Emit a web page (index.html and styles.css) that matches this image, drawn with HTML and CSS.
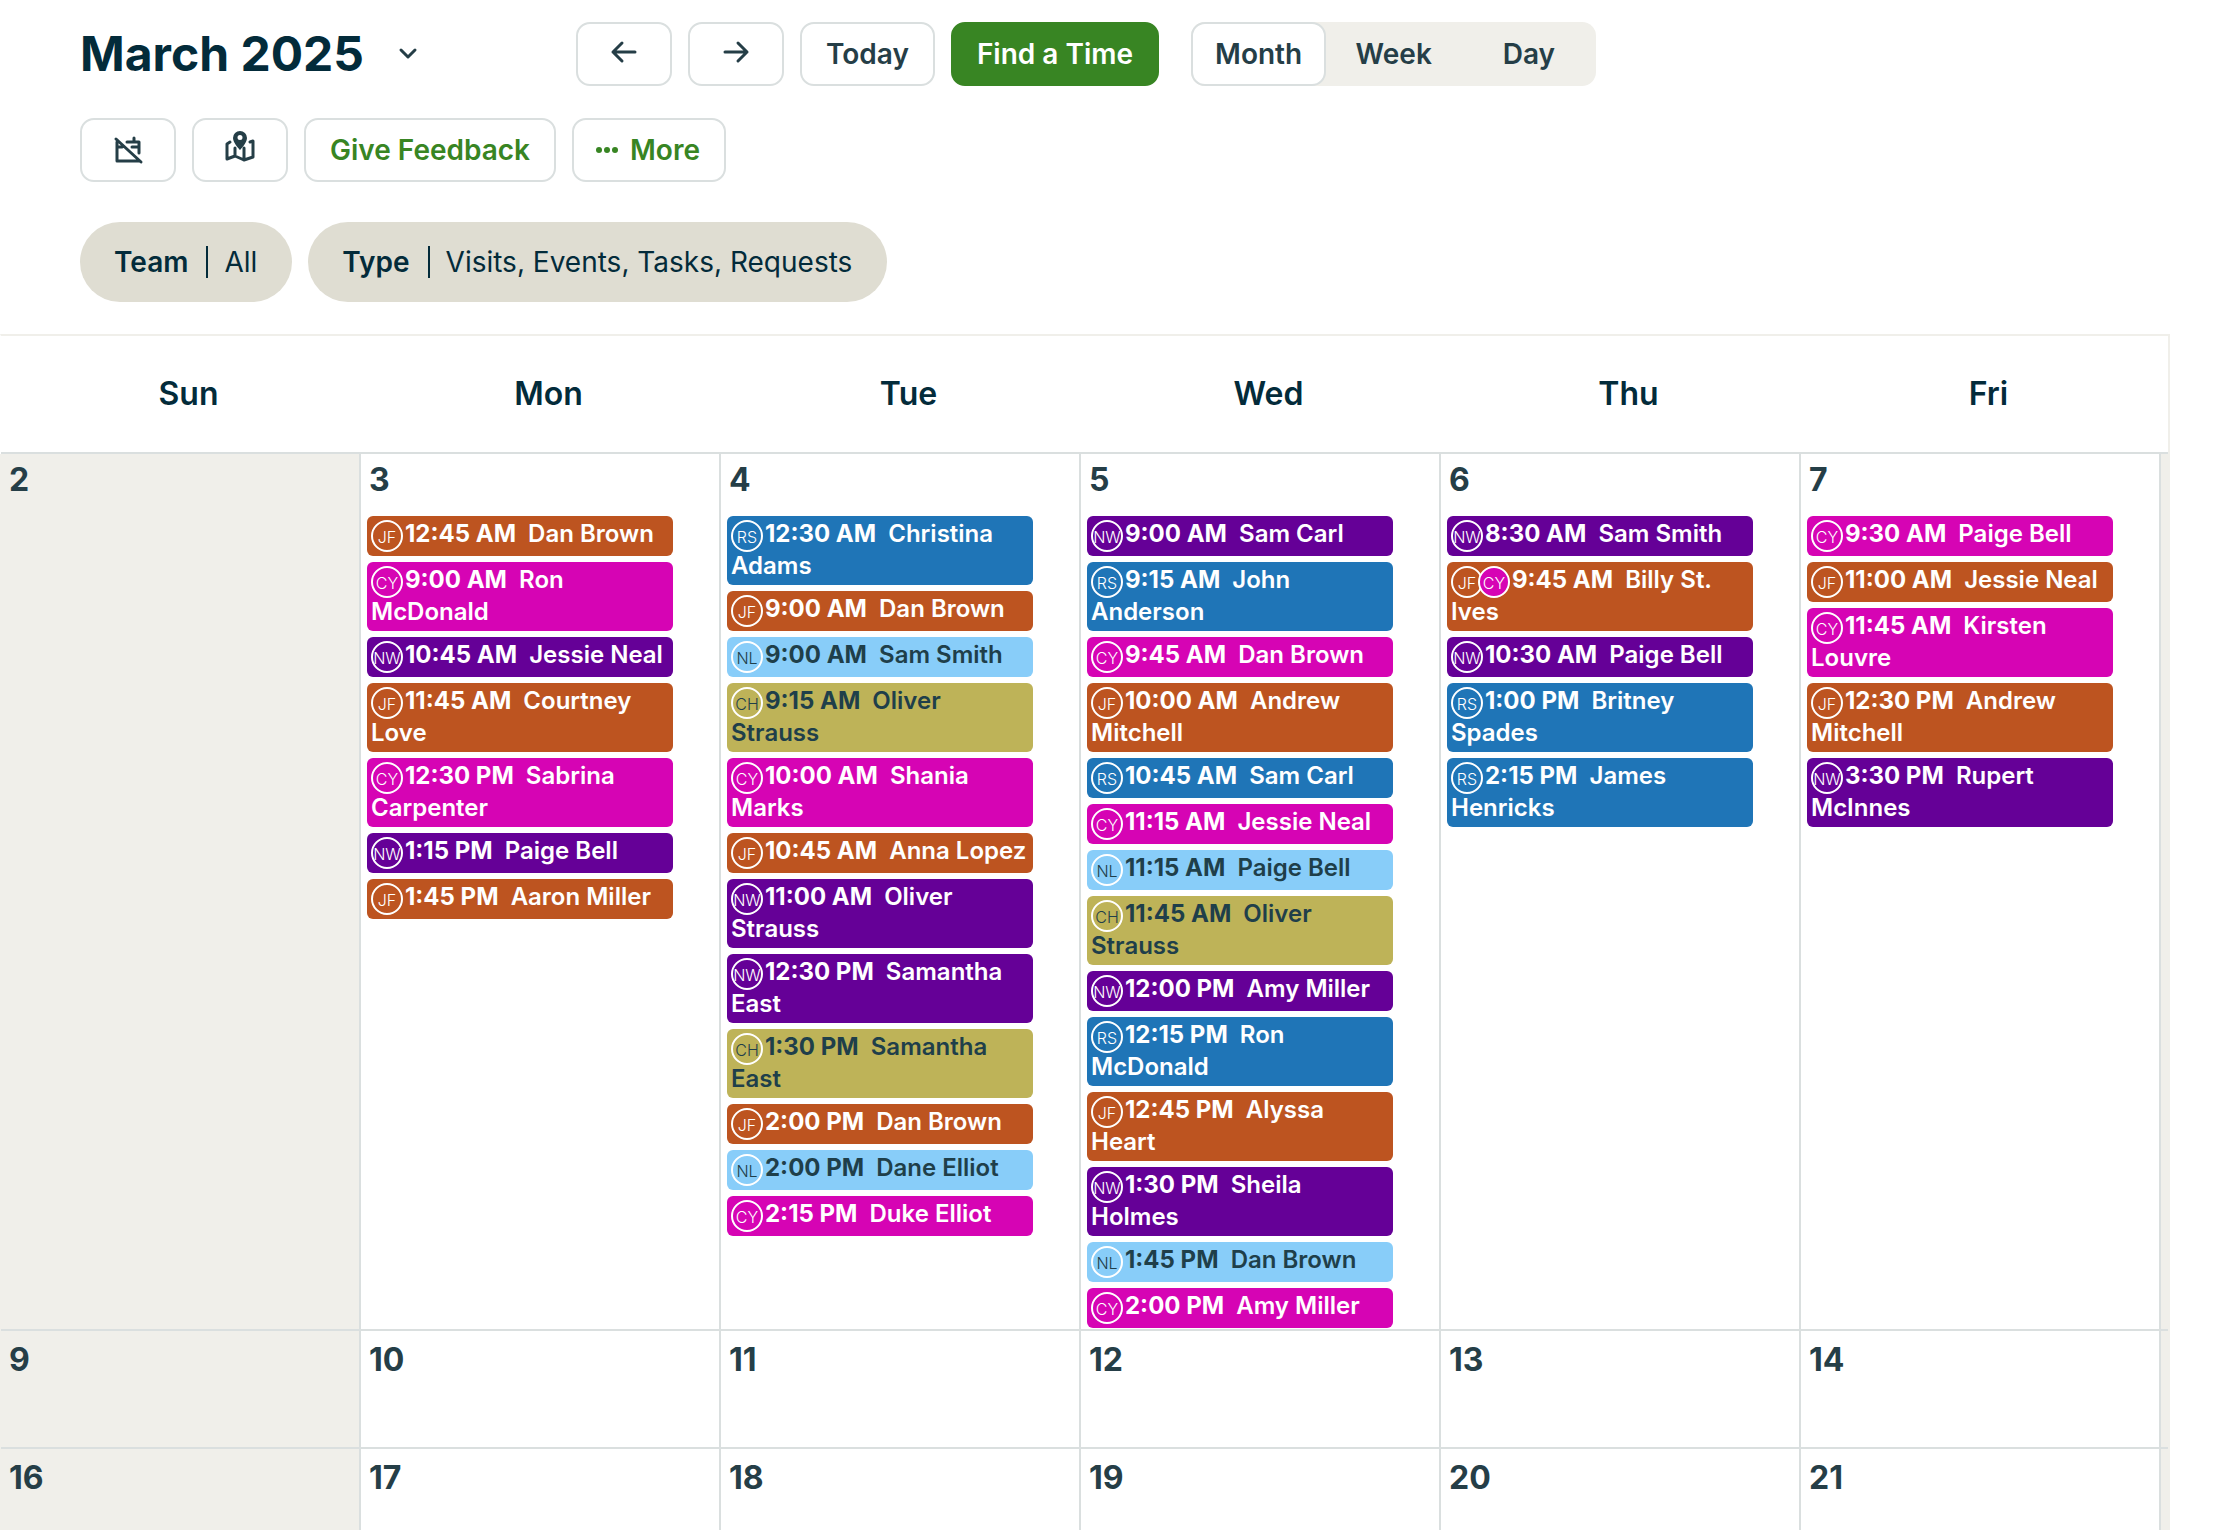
FILE: index.html
```
<!DOCTYPE html>
<html lang="en">
<head>
    <meta charset="UTF-8">
    <meta content="width=device-width, initial-scale=1.0" name="viewport">
    <title>Schedule - March 2025</title>
    <link rel="stylesheet" href="styles.css">
</head>
<body>

<!-- Toolbar -->
<header class="toolbar">
    <div class="toolbar-row">
        <div class="title-group">
            <h1>March 2025</h1>
            <button class="chevron" type="button" aria-label="Choose month">
                <svg width="20" height="12" viewBox="0 0 20 12"><path d="M3 2l7 7 7-7"/></svg>
            </button>
        </div>
        <button class="btn icon-btn" type="button" aria-label="Previous month">
            <svg width="32" height="32" viewBox="0 0 32 32"><path d="M27 14H5M14 5l-9 9 9 9"/></svg>
        </button>
        <button class="btn icon-btn" type="button" aria-label="Next month">
            <svg width="32" height="32" viewBox="0 0 32 32"><path d="M5 14h22M18 5l9 9-9 9"/></svg>
        </button>
        <button class="btn" type="button">Today</button>
        <button class="btn primary" type="button">Find a Time</button>
        <div class="views">
            <button class="view active" type="button" aria-pressed="true">Month</button>
            <button class="view" type="button" aria-pressed="false">Week</button>
            <button class="view" type="button" aria-pressed="false">Day</button>
        </div>
    </div>

    <div class="toolbar-row">
        <button class="btn icon-btn" type="button" aria-label="Hide unscheduled">
            <svg width="32" height="32" viewBox="0 0 32 32"><path d="M5 8v19h22M5 13h5M15 8h12v11M20 13h7M22 4v4M4 5l25 23"/></svg>
        </button>
        <button class="btn icon-btn" type="button" aria-label="Map">
            <svg width="32" height="32" viewBox="0 3 32 32"><path d="M6 11l-3 2v15l8-3 9 4 9-3V10l-3 1M11 17v8M20 17v12"/><path class="solid" fill-rule="evenodd" d="M16 0a7 7 0 0 1 7 7c0 5-7 12-7 12S9 12 9 7a7 7 0 0 1 7-7zM16 4a2 2 0 0 0 0 5 2 2 0 0 0 0-5z"/></svg>
        </button>
        <button class="btn link" type="button">Give Feedback</button>
        <button class="btn link more" type="button">
            <svg width="22" height="6" viewBox="0 0 22 6"><circle cx="3" cy="3" r="3"/><circle cx="11" cy="3" r="3"/><circle cx="19" cy="3" r="3"/></svg>
            More
        </button>
    </div>

    <div class="toolbar-row filters">
        <button class="filter" type="button"><b>Team</b><span>All</span></button>
        <button class="filter" type="button"><b>Type</b><span>Visits, Events, Tasks, Requests</span></button>
    </div>
</header>

<!-- Month grid, filled in by the script below -->
<table class="calendar">
    <colgroup><col><col><col><col><col><col><col class="edge"></colgroup>
    <thead>
        <tr><th>Sun</th><th>Mon</th><th>Tue</th><th>Wed</th><th>Thu</th><th>Fri</th><td></td></tr>
    </thead>
    <tbody id="weeks"></tbody>
</table>

<script>
    // [initials, time, client]
    const visits = {
        3: [
            ['JF', '12:45 AM', 'Dan Brown'],
            ['CY', '9:00 AM', 'Ron McDonald'],
            ['NW', '10:45 AM', 'Jessie Neal'],
            ['JF', '11:45 AM', 'Courtney Love'],
            ['CY', '12:30 PM', 'Sabrina Carpenter'],
            ['NW', '1:15 PM', 'Paige Bell'],
            ['JF', '1:45 PM', 'Aaron Miller']
        ],
        4: [
            ['RS', '12:30 AM', 'Christina Adams'],
            ['JF', '9:00 AM', 'Dan Brown'],
            ['NL', '9:00 AM', 'Sam Smith'],
            ['CH', '9:15 AM', 'Oliver Strauss'],
            ['CY', '10:00 AM', 'Shania Marks'],
            ['JF', '10:45 AM', 'Anna Lopez'],
            ['NW', '11:00 AM', 'Oliver Strauss'],
            ['NW', '12:30 PM', 'Samantha East'],
            ['CH', '1:30 PM', 'Samantha East'],
            ['JF', '2:00 PM', 'Dan Brown'],
            ['NL', '2:00 PM', 'Dane Elliot'],
            ['CY', '2:15 PM', 'Duke Elliot']
        ],
        5: [
            ['NW', '9:00 AM', 'Sam Carl'],
            ['RS', '9:15 AM', 'John Anderson'],
            ['CY', '9:45 AM', 'Dan Brown'],
            ['JF', '10:00 AM', 'Andrew Mitchell'],
            ['RS', '10:45 AM', 'Sam Carl'],
            ['CY', '11:15 AM', 'Jessie Neal'],
            ['NL', '11:15 AM', 'Paige Bell'],
            ['CH', '11:45 AM', 'Oliver Strauss'],
            ['NW', '12:00 PM', 'Amy Miller'],
            ['RS', '12:15 PM', 'Ron McDonald'],
            ['JF', '12:45 PM', 'Alyssa Heart'],
            ['NW', '1:30 PM', 'Sheila Holmes'],
            ['NL', '1:45 PM', 'Dan Brown'],
            ['CY', '2:00 PM', 'Amy Miller']
        ],
        6: [
            ['NW', '8:30 AM', 'Sam Smith'],
            ['JF CY', '9:45 AM', 'Billy St. Ives'],
            ['NW', '10:30 AM', 'Paige Bell'],
            ['RS', '1:00 PM', 'Britney Spades'],
            ['RS', '2:15 PM', 'James Henricks']
        ],
        7: [
            ['CY', '9:30 AM', 'Paige Bell'],
            ['JF', '11:00 AM', 'Jessie Neal'],
            ['CY', '11:45 AM', 'Kirsten Louvre'],
            ['JF', '12:30 PM', 'Andrew Mitchell'],
            ['NW', '3:30 PM', 'Rupert McInnes']
        ]
    };

    // Build one visit card
    function visitCard([people, time, client]) {
        const team = people.split(' ');
        const avatars = team.map(p => `<span class="avatar ${p.toLowerCase()}">${p}</span>`).join('');
        return `<div class="visit ${team[0].toLowerCase()}">${avatars}<b>${time}</b>&nbsp; <span>${client}</span></div>`;
    }

    // Build the weeks, each starting on Sunday
    let rows = '';
    for (const sunday of [2, 9, 16]) {
        rows += '<tr>';
        for (let day = sunday; day < sunday + 6; day++) {
            const cards = (visits[day] || []).map(visitCard).join('');
            rows += `<td><div class="date">${day}</div>${cards}</td>`;
        }
        rows += '<td></td></tr>';
    }
    document.getElementById('weeks').innerHTML = rows;
</script>

</body>
</html>
```
FILE: styles.css
```
* {
    box-sizing: border-box;
}
body {
    margin: 0;
    height: 100vh;
    overflow: hidden;
    background-color: #fff;
    color: #253e47;
    font-family: Inter, "Liberation Sans", sans-serif;
}
button {
    font: inherit;
    color: inherit;
    cursor: pointer;
}
svg {
    overflow: visible;
    fill: none;
    stroke: currentColor;
    stroke-width: 3;
    stroke-linecap: round;
    stroke-linejoin: round;
}

/* Toolbar */
.toolbar {
    padding: 22px 80px 32px;
}
.toolbar-row {
    display: flex;
    gap: 16px;
    margin-bottom: 32px;
}
.title-group {
    display: flex;
    align-items: center;
    width: 480px;
    gap: 24px;
}
h1 {
    margin: 0;
    color: #032b3a;
    font-size: 48px;
    font-weight: 700;
    line-height: 64px;
}
.chevron {
    display: flex;
    padding: 10px;
    border: none;
    background: none;
}
.btn {
    display: flex;
    align-items: center;
    justify-content: center;
    height: 64px;
    padding: 0 24px;
    border: 2px solid #dadfdf;
    border-radius: 14px;
    background-color: #fff;
    font-size: 28px;
    font-weight: 600;
}
.icon-btn {
    width: 96px;
}
.primary {
    border-color: #388523;
    background-color: #388523;
    color: #fff;
}
.link {
    color: #388523;
}
.more {
    gap: 12px;
    padding: 0 24px 0 22px;
}
.more svg, .solid {
    fill: currentColor;
    stroke: none;
}
.views {
    display: grid;
    grid-template-columns: 1fr 1fr 1fr;
    margin-left: 16px;
    border-radius: 14px;
    background-color: #f0efea;
}
.view {
    padding: 0 22px;
    border: 2px solid transparent;
    border-radius: 14px;
    background: none;
    font-size: 28px;
    font-weight: 600;
}
.active {
    border-color: #dadfdf;
    background-color: #fff;
}
.filters {
    margin: 40px 0 0;
}
.filter {
    display: flex;
    align-items: center;
    height: 80px;
    padding: 0 35px 0 34px;
    border: none;
    border-radius: 40px;
    background-color: #dfddd2;
    color: #032b3a;
    font-size: 28px;
}
.filter b {
    font-weight: 600;
}
.filter span {
    margin-left: 18px;
    padding-left: 16px;
    border-left: 2px solid #032b3a;
    line-height: 32px;
}

/* Calendar */
.calendar {
    width: calc(100% - 68px);
    table-layout: fixed;
    border-spacing: 0;
    border: 2px solid #f0efea;
    border-left: 1px solid transparent;
    border-bottom: none;
}
.edge {
    width: 7px;
}
th {
    height: 118px;
    padding: 0 0 2px 15px;
    border-bottom: 2px solid #dadfdf;
    color: #032b3a;
    font-size: 32px;
    font-weight: 600;
}
thead td {
    padding: 0;
    border-bottom: 2px solid #dadfdf;
}
tbody td {
    height: 118px;
    padding: 9px 0 1px;
    border-right: 2px solid #dadfdf;
    border-bottom: 2px solid #dadfdf;
    vertical-align: top;
}
tbody tr:first-child td {
    padding-top: 6px;
}
tbody td:first-child, tbody td:last-child {
    background-color: #f0efea;
}
tbody td:first-child {
    box-shadow: -1px 0 #f0efea;
}
tbody td:last-child {
    border-right: none;
}
.date {
    padding-left: 8px;
    font-size: 32px;
    font-weight: 700;
    line-height: 40px;
}
.date + .visit {
    margin-top: 16px;
}
.visit {
    min-height: 40px;
    margin: 6px 46px 0 6px;
    padding: 2px 4px 3px;
    border-radius: 6px;
    color: #fff;
    font-size: 24px;
    font-weight: 600;
    line-height: 32px;
}
.visit b {
    font-weight: 700;
}
.avatar {
    display: inline-block;
    width: 32px;
    height: 32px;
    margin: 2px 2px -4px 0;
    border: 2px solid #fff;
    border-radius: 50%;
    font-size: 16px;
    font-weight: 300;
    line-height: 30px;
    text-align: center;
    vertical-align: top;
}
.avatar + .avatar {
    margin-left: -7px;
}
.jf { background-color: #bd5420; }
.cy { background-color: #d604b4; }
.nw { background-color: #650097; }
.rs { background-color: #1f75b7; }
.nl { background-color: #88cdf9; color: #1f3f4a; }
.ch { background-color: #beb358; color: #1f3f4a; }
```
